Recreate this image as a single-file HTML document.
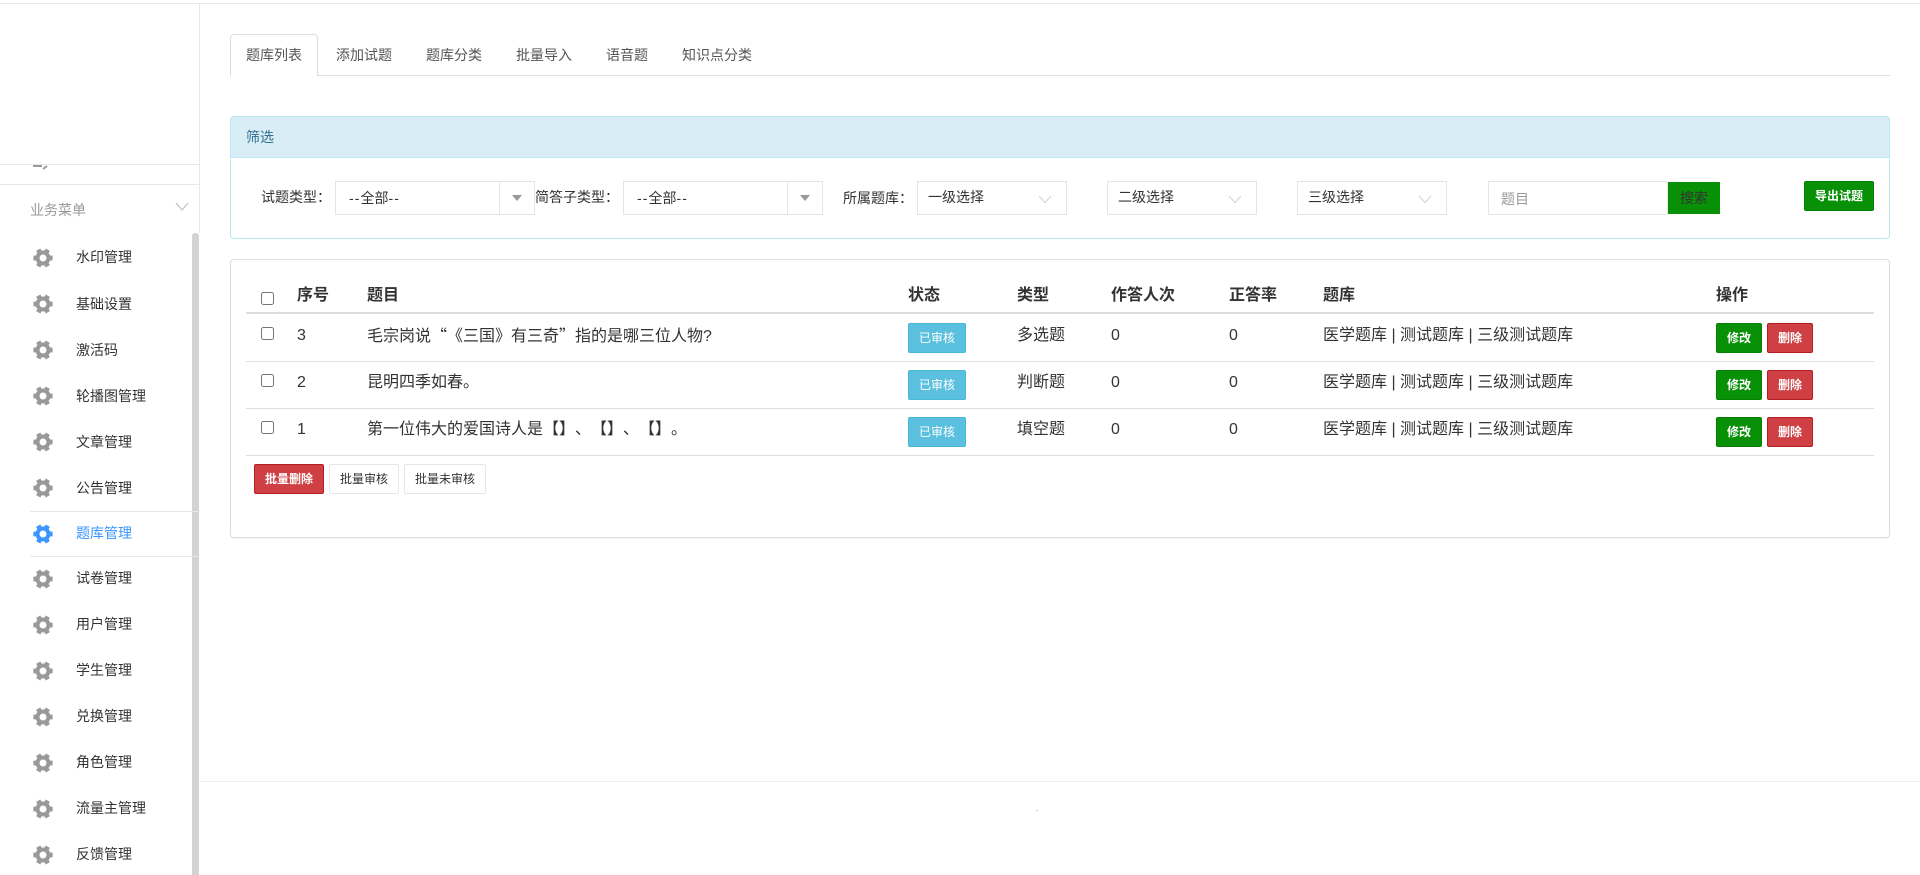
<!DOCTYPE html>
<html lang="zh-CN">
<head>
<meta charset="utf-8">
<title>题库管理</title>
<style>
html,body{margin:0;padding:0;background:#fff;}
body{position:relative;width:1920px;height:875px;overflow:hidden;font-family:"Liberation Sans","Noto Sans CJK SC",sans-serif;font-size:14px;color:#333;text-spacing-trim:space-all;}
.a{position:absolute;box-sizing:border-box;white-space:nowrap;}
.l{position:absolute;background:#e7e7e7;}
.t{position:absolute;white-space:nowrap;line-height:20px;height:20px;}
.m{position:absolute;left:76px;white-space:nowrap;line-height:20px;height:20px;font-size:14px;color:#333;}
svg.g{position:absolute;left:32.5px;width:20px;height:20px;color:#999;}
.sel{position:absolute;box-sizing:border-box;top:181px;height:34px;border:1px solid #e5e5e5;background:#fff;}
.btn{position:absolute;box-sizing:border-box;text-align:center;font-size:12px;border-radius:2px;line-height:28px;height:30px;white-space:nowrap;}
.bd{font-weight:700;}
.g1{background:#089107;border:1px solid #078006;color:#fff;}
.r1{background:#cf4044;border:1px solid #b51d22;color:#fff;}
.w1{background:#fff;border:1px solid #e7e7e7;color:#333;}
.b1{background:#5bc0de;border:1px solid #46b8da;color:#fff;}
.h{position:absolute;top:286px;font-size:16px;font-weight:700;line-height:20px;color:#333;white-space:nowrap;}
.c{position:absolute;font-size:16px;line-height:22px;color:#333;white-space:nowrap;}
.q{font-family:"Noto Sans CJK SC",sans-serif;}
.d{letter-spacing:1.1px;}
.cb{position:absolute;left:261px;box-sizing:border-box;width:13px;height:13px;border:1px solid #767676;border-radius:2.5px;background:#fff;}
.tab{position:absolute;top:45px;font-size:14px;line-height:20px;color:#555;white-space:nowrap;}
.lab{position:absolute;top:187px;font-size:14px;line-height:20px;color:#333;white-space:nowrap;}
</style>
</head>
<body>
<svg width="0" height="0" style="position:absolute"><defs>
<g id="gear" fill="none" stroke="currentColor">
<circle cx="10" cy="10" r="5.5" stroke-width="4"/>
<g stroke-width="4.8">
<path d="M16 10H19.6"/>
<path d="M4 10H.4"/>
<path d="M13 4.8L14.8 1.7"/>
<path d="M7 4.8L5.2 1.7"/>
<path d="M13 15.2L14.8 18.3"/>
<path d="M7 15.2L5.2 18.3"/>
</g>
</g>
</defs></svg>

<!-- top and sidebar -->
<div class="l" style="left:0;top:3px;width:1920px;height:1px;"></div>
<div class="l" style="left:199px;top:3px;width:1px;height:230px;"></div>
<div class="l" style="left:0;top:164px;width:200px;height:1px;"></div>
<div class="l" style="left:0;top:184px;width:200px;height:1px;"></div>
<svg class="a" style="left:32px;top:165px;" width="18" height="5"><path d="M1 1h9" stroke="#999" stroke-width="2"/><path d="M11 4l4-3" stroke="#999" stroke-width="2"/></svg>
<div class="t" style="left:30px;top:200px;color:#999;">业务菜单</div>
<svg class="a" style="left:175px;top:202px;" width="14" height="10"><path d="M1 1l6 7 6-7" fill="none" stroke="#bbb" stroke-width="1"/></svg>
<div class="a" style="left:192px;top:233px;width:7px;height:642px;background:#d3d3d3;border-radius:3px 3px 0 0;"></div>
<div class="l" style="left:30px;top:511px;width:170px;height:1px;"></div>
<div class="l" style="left:30px;top:556px;width:170px;height:1px;"></div>

<svg class="g" style="top:248px" viewBox="0 0 20 20"><use href="#gear"/></svg><div class="m" style="top:247px">水印管理</div>
<svg class="g" style="top:294px" viewBox="0 0 20 20"><use href="#gear"/></svg><div class="m" style="top:294px">基础设置</div>
<svg class="g" style="top:340px" viewBox="0 0 20 20"><use href="#gear"/></svg><div class="m" style="top:340px">激活码</div>
<svg class="g" style="top:386px" viewBox="0 0 20 20"><use href="#gear"/></svg><div class="m" style="top:386px">轮播图管理</div>
<svg class="g" style="top:432px" viewBox="0 0 20 20"><use href="#gear"/></svg><div class="m" style="top:432px">文章管理</div>
<svg class="g" style="top:478px" viewBox="0 0 20 20"><use href="#gear"/></svg><div class="m" style="top:478px">公告管理</div>
<svg class="g" style="top:524px;color:#3b96ff" viewBox="0 0 20 20"><use href="#gear"/></svg><div class="m" style="top:523px;color:#3b96ff">题库管理</div>
<svg class="g" style="top:569px" viewBox="0 0 20 20"><use href="#gear"/></svg><div class="m" style="top:568px">试卷管理</div>
<svg class="g" style="top:615px" viewBox="0 0 20 20"><use href="#gear"/></svg><div class="m" style="top:614px">用户管理</div>
<svg class="g" style="top:661px" viewBox="0 0 20 20"><use href="#gear"/></svg><div class="m" style="top:660px">学生管理</div>
<svg class="g" style="top:707px" viewBox="0 0 20 20"><use href="#gear"/></svg><div class="m" style="top:706px">兑换管理</div>
<svg class="g" style="top:753px" viewBox="0 0 20 20"><use href="#gear"/></svg><div class="m" style="top:752px">角色管理</div>
<svg class="g" style="top:799px" viewBox="0 0 20 20"><use href="#gear"/></svg><div class="m" style="top:798px">流量主管理</div>
<svg class="g" style="top:845px" viewBox="0 0 20 20"><use href="#gear"/></svg><div class="m" style="top:844px">反馈管理</div>

<!-- tabs -->
<div class="l" style="left:230px;top:75px;width:1660px;height:1px;background:#ddd;"></div>
<div class="a" style="left:230px;top:34px;width:88px;height:42px;background:#fff;border:1px solid #ddd;border-bottom:0;border-radius:4px 4px 0 0;"></div>
<div class="tab" style="left:246px;">题库列表</div>
<div class="tab" style="left:336px;">添加试题</div>
<div class="tab" style="left:426px;">题库分类</div>
<div class="tab" style="left:516px;">批量导入</div>
<div class="tab" style="left:606px;">语音题</div>
<div class="tab" style="left:682px;">知识点分类</div>

<!-- filter panel -->
<div class="a" style="left:230px;top:116px;width:1660px;height:123px;border:1px solid #bce8f1;border-radius:4px;background:#fff;"></div>
<div class="a" style="left:230px;top:116px;width:1660px;height:42px;background:#d9edf7;border:1px solid #bce8f1;border-radius:4px 4px 0 0;"></div>
<div class="t" style="left:246px;top:127px;color:#31708f;">筛选</div>

<div class="lab" style="left:261px;">试题类型：</div>
<div class="sel" style="left:335px;width:200px;"></div>
<div class="l" style="left:499px;top:182px;width:1px;height:32px;"></div>
<svg class="a" style="left:512px;top:195px;" width="10" height="6"><path d="M0 0h10L5 6z" fill="#999"/></svg>
<div class="lab" style="left:349px;top:188px;"><span class="d">--</span>全部<span class="d">--</span></div>

<div class="lab" style="left:535px;">简答子类型：</div>
<div class="sel" style="left:623px;width:200px;"></div>
<div class="l" style="left:787px;top:182px;width:1px;height:32px;"></div>
<svg class="a" style="left:800px;top:195px;" width="10" height="6"><path d="M0 0h10L5 6z" fill="#999"/></svg>
<div class="lab" style="left:637px;top:188px;"><span class="d">--</span>全部<span class="d">--</span></div>

<div class="lab" style="left:843px;top:188px;">所属题库：</div>
<div class="sel" style="left:917px;width:150px;"></div>
<div class="lab" style="left:928px;">一级选择</div>
<svg class="a" style="left:1038px;top:195px;" width="14" height="9"><path d="M1 1l6 6.5L13 1" fill="none" stroke="#d2d2d2" stroke-width="1"/></svg>

<div class="sel" style="left:1107px;width:150px;"></div>
<div class="lab" style="left:1118px;">二级选择</div>
<svg class="a" style="left:1228px;top:195px;" width="14" height="9"><path d="M1 1l6 6.5L13 1" fill="none" stroke="#d2d2d2" stroke-width="1"/></svg>

<div class="sel" style="left:1297px;width:150px;"></div>
<div class="lab" style="left:1308px;">三级选择</div>
<svg class="a" style="left:1418px;top:195px;" width="14" height="9"><path d="M1 1l6 6.5L13 1" fill="none" stroke="#d2d2d2" stroke-width="1"/></svg>

<div class="sel" style="left:1488px;width:180px;"></div>
<div class="lab" style="left:1501px;top:189px;color:#999;">题目</div>
<div class="a" style="left:1668px;top:182px;width:52px;height:32px;background:#089107;color:#333;text-align:center;line-height:32px;font-size:14px;">搜索</div>
<div class="btn g1 bd" style="left:1804px;top:181px;width:70px;">导出试题</div>

<!-- table card -->
<div class="a" style="left:230px;top:259px;width:1660px;height:279px;border:1px solid #ddd;border-radius:4px;background:#fff;box-shadow:0 1px 1px rgba(0,0,0,.05);"></div>
<div class="l" style="left:246px;top:312px;width:1628px;height:2px;background:#ddd;"></div>
<div class="l" style="left:246px;top:361px;width:1628px;height:1px;background:#ddd;"></div>
<div class="l" style="left:246px;top:408px;width:1628px;height:1px;background:#ddd;"></div>
<div class="l" style="left:246px;top:455px;width:1628px;height:1px;background:#ddd;"></div>

<div class="cb" style="top:292px"></div>
<div class="h" style="left:297px">序号</div>
<div class="h" style="left:367px">题目</div>
<div class="h" style="left:908px">状态</div>
<div class="h" style="left:1017px">类型</div>
<div class="h" style="left:1111px">作答人次</div>
<div class="h" style="left:1229px">正答率</div>
<div class="h" style="left:1323px">题库</div>
<div class="h" style="left:1716px">操作</div>

<!-- row 1 -->
<div class="cb" style="top:327px"></div>
<div class="c" style="left:297px;top:325px">3</div>
<div class="c" style="left:367px;top:323px"><span class="q">毛宗岗说“《三国》有三奇”指的是哪三位人物</span>?</div>
<div class="btn b1" style="left:908px;top:323px;width:58px;">已审核</div>
<div class="c" style="left:1017px;top:325px">多选题</div>
<div class="c" style="left:1111px;top:325px">0</div>
<div class="c" style="left:1229px;top:325px">0</div>
<div class="c" style="left:1323px;top:325px">医学题库 | 测试题库 | 三级测试题库</div>
<div class="btn g1 bd" style="left:1716px;top:323px;width:46px;">修改</div>
<div class="btn r1 bd" style="left:1767px;top:323px;width:46px;">删除</div>

<!-- row 2 -->
<div class="cb" style="top:374px"></div>
<div class="c" style="left:297px;top:372px">2</div>
<div class="c" style="left:367px;top:372px">昆明四季如春。</div>
<div class="btn b1" style="left:908px;top:370px;width:58px;">已审核</div>
<div class="c" style="left:1017px;top:372px">判断题</div>
<div class="c" style="left:1111px;top:372px">0</div>
<div class="c" style="left:1229px;top:372px">0</div>
<div class="c" style="left:1323px;top:372px">医学题库 | 测试题库 | 三级测试题库</div>
<div class="btn g1 bd" style="left:1716px;top:370px;width:46px;">修改</div>
<div class="btn r1 bd" style="left:1767px;top:370px;width:46px;">删除</div>

<!-- row 3 -->
<div class="cb" style="top:421px"></div>
<div class="c" style="left:297px;top:419px">1</div>
<div class="c" style="left:367px;top:419px">第一位伟大的爱国诗人是【】、【】、【】。</div>
<div class="btn b1" style="left:908px;top:417px;width:58px;">已审核</div>
<div class="c" style="left:1017px;top:419px">填空题</div>
<div class="c" style="left:1111px;top:419px">0</div>
<div class="c" style="left:1229px;top:419px">0</div>
<div class="c" style="left:1323px;top:419px">医学题库 | 测试题库 | 三级测试题库</div>
<div class="btn g1 bd" style="left:1716px;top:417px;width:46px;">修改</div>
<div class="btn r1 bd" style="left:1767px;top:417px;width:46px;">删除</div>

<div class="btn r1 bd" style="left:254px;top:464px;width:70px;">批量删除</div>
<div class="btn w1" style="left:329px;top:464px;width:70px;">批量审核</div>
<div class="btn w1" style="left:404px;top:464px;width:82px;">批量未审核</div>

<!-- footer -->
<div class="l" style="left:200px;top:781px;width:1720px;height:1px;background:#eee;"></div>
<div class="a" style="left:1036px;top:810px;width:2px;height:1px;background:#ccc;"></div>
</body>
</html>
